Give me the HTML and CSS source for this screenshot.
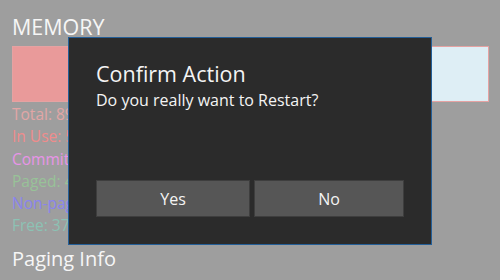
FILE: index.html
```html
<!DOCTYPE html>
<html>
<head>
<meta charset="utf-8">
<link rel="stylesheet" href="styles.css">
</head>
<body>
<main class="page">
  <h1 class="heading">MEMORY</h1>
  <div class="bar">
    <div class="bar-used"></div>
    <div class="bar-free"></div>
  </div>
  <ul class="stats">
    <li class="stat total">Total: 8984 MB</li>
    <li class="stat inuse">In Use: 5210 MB</li>
    <li class="stat commit">Committed: 6120 MB</li>
    <li class="stat paged">Paged: 412 MB</li>
    <li class="stat nonpaged">Non-paged: 188 MB</li>
    <li class="stat free">Free: 3774 MB</li>
  </ul>
  <h2 class="subheading">Paging Info</h2>
</main>
<div class="dialog" role="dialog">
  <div class="dialog-text">
    <div class="dialog-title">Confirm Action</div>
    <div class="dialog-msg">Do you really want to Restart?</div>
  </div>
  <div class="dialog-buttons">
    <button class="btn">Yes</button>
    <button class="btn">No</button>
  </div>
</div>
</body>
</html>
```
FILE: styles.css
```css
* { box-sizing: border-box; }
html, body { margin: 0; padding: 0; }
body {
  width: 500px;
  height: 280px;
  overflow: hidden;
  background: #9e9e9e;
  font-family: "Segoe UI", "Open Sans", sans-serif;
  color: #f4f4f4;
}
.page {
  padding: 13px 11px 0 12px;
}
.heading {
  margin: 0;
  font-size: 21.5px;
  font-weight: 400;
  line-height: 28px;
  color: #f6f6f6;
}
.bar {
  margin-top: 5px;
  height: 56px;
  display: flex;
  border: 1px solid #e5a2a2;
}
.bar-used { flex: 0 0 55%; background: #e99a9a; }
.bar-free { flex: 1; background: #deeef5; }
.stats {
  list-style: none;
  margin: 1px 0 0;
  padding: 0;
}
.stat {
  font-size: 15.5px;
  line-height: 22.3px;
  white-space: nowrap;
}
.total { color: #e2a6a6; }
.inuse { color: #f08c8c; }
.commit { color: #e894e8; }
.paged { color: #98c298; }
.nonpaged { color: #8a84ee; }
.free { color: #8cc2b4; }
.subheading {
  margin: 8px 0 0;
  font-size: 20px;
  font-weight: 400;
  line-height: 28px;
  color: #f6f6f6;
}
.dialog {
  position: absolute;
  left: 68px;
  top: 37px;
  width: 364px;
  height: 208px;
  background: #2b2b2b;
  border: 1px solid #245f98;
  padding: 22px 27px 27px 27px;
  display: flex;
  flex-direction: column;
  justify-content: space-between;
}
.dialog-title {
  font-size: 21.5px;
  line-height: 28px;
  color: #f4f4f4;
}
.dialog-msg {
  font-size: 16px;
  line-height: 24px;
  color: #f4f4f4;
}
.dialog-buttons {
  display: grid;
  grid-template-columns: 154px 150px;
  gap: 4px;
}
.btn {
  height: 37px;
  background: #565656;
  border: 1px solid #3e3e3e;
  color: #f4f4f4;
  font-family: inherit;
  font-size: 16px;
  padding: 0;
}
```
